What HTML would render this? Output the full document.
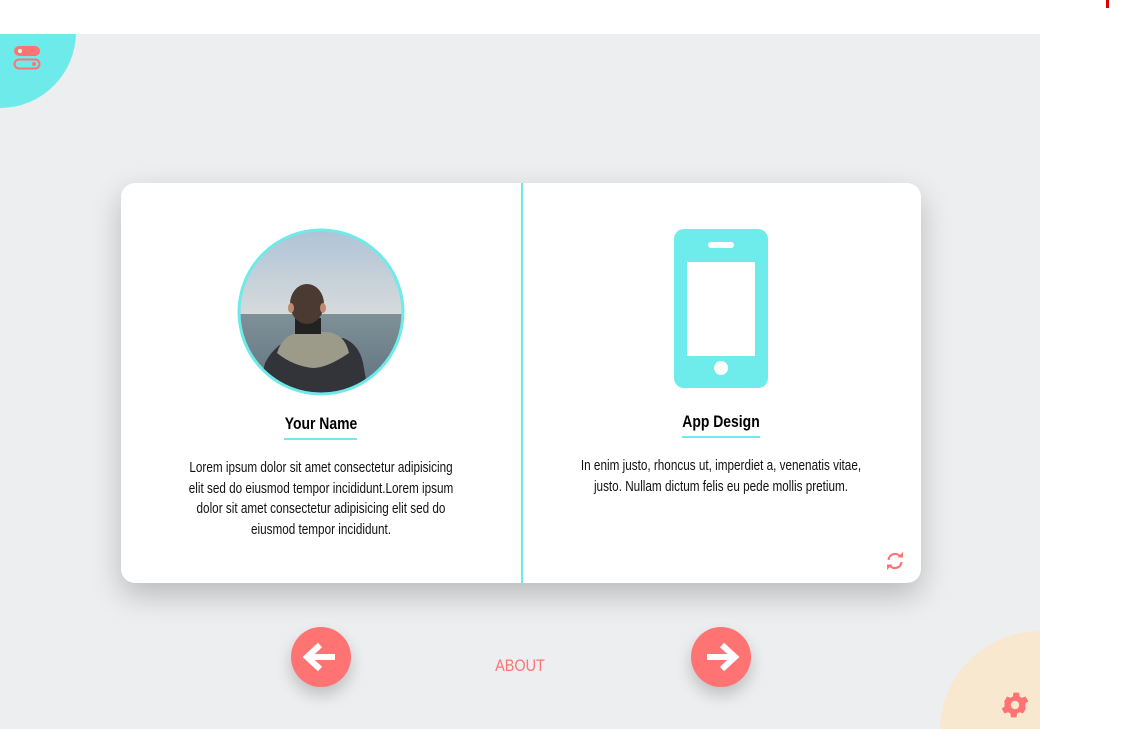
<!DOCTYPE html>
<html><head><meta charset="utf-8"><style>
*{margin:0;padding:0;box-sizing:border-box}
html,body{width:1139px;height:729px;overflow:hidden}
body{background:#fff;position:relative;font-family:"Liberation Sans",sans-serif}
#bg{position:absolute;left:0;top:34px;width:1040px;height:695px;background:#eceef0;overflow:hidden}
.c1{position:absolute;left:-76px;top:-78px;width:152px;height:152px;border-radius:50%;background:#6eeaea}
.c2{position:absolute;left:940px;top:597px;width:200px;height:200px;border-radius:50%;background:#f8e8d0}
.card{position:absolute;left:121px;top:149px;width:800px;height:400px;background:#fff;border-radius:14px;box-shadow:0 12px 30px rgba(0,0,0,.22)}
.div{position:absolute;left:400px;top:0;width:1.5px;height:400px;background:#6eeaea}
.t{position:absolute;text-align:center;color:#111;font-size:14.3px;line-height:20.5px;transform:scaleX(.82);transform-origin:center top}
.h{position:absolute;font-weight:bold;font-size:17px;color:#000;text-align:center;transform:scaleX(.82)}
.u{position:absolute;height:2px;background:#6eeaea}
.btn{position:absolute;width:60px;height:60px;border-radius:50%;background:#ff7373;box-shadow:0 8px 16px rgba(0,0,0,.2)}
</style></head><body>
<div style="position:absolute;left:1106px;top:0;width:3px;height:8px;background:#d00"></div>
<div id="bg">
<div class="c1"></div>
<svg style="position:absolute;left:13px;top:11px" width="28" height="26"><rect x="1" y="1" width="26" height="10" rx="5" fill="#ff7373"/><circle cx="7" cy="6" r="2" fill="#cfe"/><rect x="1.5" y="14.5" width="25" height="9" rx="4.5" fill="none" stroke="#ff7373" stroke-width="2"/><circle cx="21" cy="19" r="2" fill="#ff7373"/></svg>
<div class="c2"></div>
<svg style="position:absolute;left:1001px;top:657px" width="28" height="28" viewBox="2 2 20 20"><path fill="#ff7373" d="M19.4 13a7.5 7.5 0 000-2l2.1-1.6-2-3.5-2.5 1a7 7 0 00-1.7-1l-.4-2.7h-4l-.4 2.7a7 7 0 00-1.7 1l-2.5-1-2 3.5L4.6 11a7.5 7.5 0 000 2l-2.1 1.6 2 3.5 2.5-1a7 7 0 001.7 1l.4 2.7h4l.4-2.7a7 7 0 001.7-1l2.5 1 2-3.5zM12 15a3 3 0 110-6 3 3 0 010 6z"/></svg>
<div class="card">
<div class="div"></div>
<svg style="position:absolute;left:116px;top:45px" width="168" height="168" viewBox="0 0 168 168">
<defs><clipPath id="cp"><circle cx="84" cy="84" r="82"/></clipPath><linearGradient id="sky" x1="0" y1="0" x2="0" y2="1"><stop offset="0" stop-color="#aec2d6"/><stop offset="1" stop-color="#d8dcdc"/></linearGradient><linearGradient id="sea" x1="0" y1="0" x2="0" y2="1"><stop offset="0" stop-color="#7f9098"/><stop offset="1" stop-color="#5e727c"/></linearGradient></defs>
<g clip-path="url(#cp)">
<rect width="168" height="90" fill="url(#sky)"/>
<rect y="86" width="168" height="82" fill="url(#sea)"/>
<path d="M20 168 L28 135 Q40 112 62 110 L106 110 Q122 116 126 135 L132 168Z" fill="#33333a"/>
<path d="M40 125 Q46 105 66 104 L90 104 Q108 106 112 125 Q90 140 76 140 Q56 138 40 125Z" fill="#9c9a88"/>
<rect x="58" y="90" width="26" height="16" fill="#222"/>
<ellipse cx="70" cy="76" rx="17" ry="20" fill="#4a3a32"/>
<ellipse cx="54" cy="80" rx="3" ry="5" fill="#c08a70"/>
<ellipse cx="86" cy="80" rx="3" ry="5" fill="#c08a70"/>
</g>
<circle cx="84" cy="84" r="82" fill="none" stroke="#6eeaea" stroke-width="3"/>
</svg>
<div class="h" style="left:100px;top:231px;width:200px">Your Name</div>
<div class="u" style="left:163px;top:255px;width:73px"></div>
<div class="t" style="left:30px;top:275px;width:340px">Lorem ipsum dolor sit amet consectetur adipisicing elit sed do eiusmod tempor incididunt.Lorem ipsum dolor sit amet consectetur adipisicing elit sed do eiusmod tempor incididunt.</div>
<svg style="position:absolute;left:553px;top:46px" width="94" height="159" viewBox="0 0 94 159"><rect width="94" height="159" rx="10" fill="#6eeceb"/><rect x="13" y="33" width="68" height="94" fill="#fff"/><rect x="34" y="13" width="26" height="6" rx="3" fill="#fff"/><circle cx="47" cy="139" r="7" fill="#fff"/></svg>
<div class="h" style="left:500px;top:229px;width:200px">App Design</div>
<div class="u" style="left:561px;top:253px;width:78px"></div>
<div class="t" style="left:412px;top:273px;width:376px">In enim justo, rhoncus ut, imperdiet a, venenatis vitae, justo. Nullam dictum felis eu pede mollis pretium.</div>
<svg style="position:absolute;left:764px;top:369px" width="20" height="18" viewBox="0 0 20 18"><path d="M3.5 8A6.5 6.5 0 0 1 15.5 5M16.5 10A6.5 6.5 0 0 1 4.5 13" fill="none" stroke="#ff7373" stroke-width="2.2"/><path d="M12.5 5.5h5.5V0z M7.5 12.5H2v5.5z" fill="#ff7373"/></svg>
</div>
<div class="btn" style="left:291px;top:593px"><svg width="60" height="60"><path d="M16 30h28M29 18L16 30l13 12" fill="none" stroke="#fff" stroke-width="6"/></svg></div>
<div class="btn" style="left:691px;top:593px"><svg width="60" height="60"><path d="M16 30h28M31 18l13 12-13 12" fill="none" stroke="#fff" stroke-width="6"/></svg></div>
<div style="position:absolute;left:470px;top:622px;width:100px;text-align:center;color:#ff7373;font-size:17px;transform:scaleX(.85)">ABOUT</div>
</div>
</body></html>
